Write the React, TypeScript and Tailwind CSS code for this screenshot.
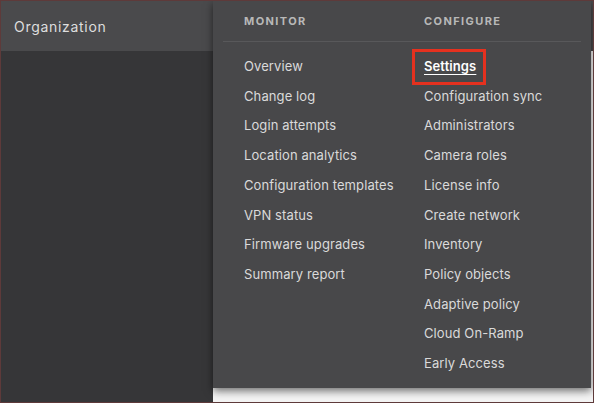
import React from "react";

const monitor = [
  "Overview",
  "Change log",
  "Login attempts",
  "Location analytics",
  "Configuration templates",
  "VPN status",
  "Firmware upgrades",
  "Summary report",
];

const configure = [
  "Settings",
  "Configuration sync",
  "Administrators",
  "Camera roles",
  "License info",
  "Create network",
  "Inventory",
  "Policy objects",
  "Adaptive policy",
  "Cloud On-Ramp",
  "Early Access",
];

export default function App() {
  return (
    <div
      className="w-[594px] h-[403px] border border-[#5e3a3a] bg-[#f4f4f4] relative overflow-hidden flex flex-col"
      style={{ fontFamily: "Inter, 'Noto Sans', sans-serif" }}
    >
      <div className="h-[50px] bg-[#4a4a4c] flex items-center pl-[13px] pt-[1px] shrink-0">
        <span className="text-[14px] text-[#dedede] tracking-[0.7px]">Organization</span>
      </div>
      <div className="flex-1 flex">
        <div className="w-[212px] bg-[#363638]" />
        <div className="flex-1 bg-[#f4f4f4]" />
      </div>

      <div className="absolute left-[212px] top-0 w-[378px] h-[387px] bg-[#48484a] shadow-[0_3px_8px_rgba(0,0,0,0.55)] px-[10px]">
        <div className="flex h-[41px] items-center border-b border-[#58585a] pt-[1px]">
          <div className="w-[180px] pl-[21px] text-[11px] font-bold tracking-[1.4px] text-[#b8b8b8]">MONITOR</div>
          <div className="pl-[21px] text-[11px] font-bold tracking-[1.4px] text-[#b8b8b8]">CONFIGURE</div>
        </div>
        <div className="flex pt-[10px]">
          <div className="w-[180px] pl-[21px] flex flex-col">
            {monitor.map((m) => (
              <div key={m} className="h-[29.7px] flex items-center text-[13px] text-[#dadada] tracking-[0.1px]">
                {m}
              </div>
            ))}
          </div>
          <div className="pl-[21px] flex flex-col">
            {configure.map((c) =>
              c === "Settings" ? (
                <div key={c} className="h-[29.7px] flex items-center">
                  <span className="relative text-[13px] font-semibold text-white underline underline-offset-[3px] decoration-1 tracking-[0.1px]">
                    {c}
                    <span className="absolute left-[-12px] right-[-10px] top-1/2 -translate-y-1/2 h-[36px] border-[3px] border-[#e5311f]" />
                  </span>
                </div>
              ) : (
                <div key={c} className="h-[29.7px] flex items-center text-[13px] text-[#dadada] tracking-[0.1px]">
                  {c}
                </div>
              )
            )}
          </div>
        </div>
      </div>
    </div>
  );
}
